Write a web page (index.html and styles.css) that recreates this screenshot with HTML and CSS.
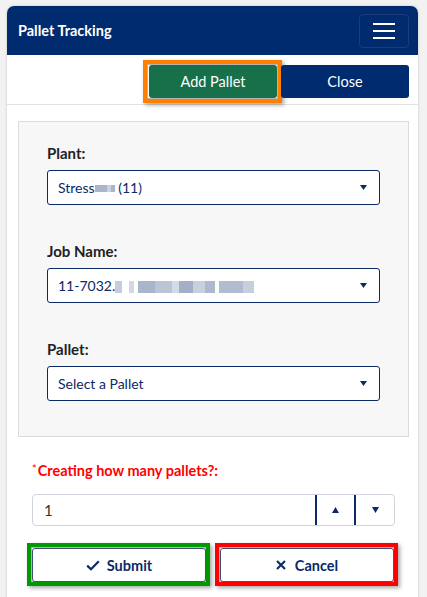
FILE: index.html
```html
<!DOCTYPE html>
<html lang="en">
<head>
<meta charset="utf-8">
<title>Pallet Tracking</title>
<link rel="stylesheet" href="styles.css">
</head>
<body>
<div class="card">
  <header class="header">
    <h1 class="title">Pallet Tracking</h1>
    <button class="menu-btn" aria-label="Menu"><span></span><span></span><span></span></button>
  </header>
  <div class="toolbar">
    <button class="btn btn-add ring ring-orange">Add Pallet</button>
    <button class="btn btn-close">Close</button>
  </div>
  <div class="content">
    <div class="panel">
      <div class="field">
        <label class="field-label">Plant:</label>
        <div class="select">
          <span class="select-text">Stress<span class="blur blur-plant"></span> (11)</span>
          <svg class="caret" width="7" height="5" viewBox="0 0 7 5"><path d="M0 0H7L3.5 5Z" fill="#0b2a66"/></svg>
        </div>
      </div>
      <div class="field">
        <label class="field-label">Job Name:</label>
        <div class="select">
          <span class="select-text">11-7032.<span class="blur blur-job"></span></span>
          <svg class="caret" width="7" height="5" viewBox="0 0 7 5"><path d="M0 0H7L3.5 5Z" fill="#0b2a66"/></svg>
        </div>
      </div>
      <div class="field">
        <label class="field-label">Pallet:</label>
        <div class="select">
          <span class="select-text">Select a Pallet</span>
          <svg class="caret" width="7" height="5" viewBox="0 0 7 5"><path d="M0 0H7L3.5 5Z" fill="#0b2a66"/></svg>
        </div>
      </div>
    </div>
    <div class="qty">
      <div class="qty-label"><span class="req">*</span>Creating how many pallets?:</div>
      <div class="number">
        <span class="number-value">1</span>
        <span class="spin"><svg width="7" height="6" viewBox="0 0 7 6"><path d="M0 6H7L3.5 0Z" fill="#0b2a66"/></svg></span>
        <span class="spin spin-last"><svg width="7" height="6" viewBox="0 0 7 6"><path d="M0 0H7L3.5 6Z" fill="#0b2a66"/></svg></span>
      </div>
      <div class="actions">
        <button class="action ring ring-green">
          <svg width="14" height="11" viewBox="0 0 14 11"><polyline points="1.2,5.6 5,9.2 12.8,1.3" fill="none" stroke="#0b2a66" stroke-width="2.2"/></svg>
          Submit
        </button>
        <button class="action action-cancel ring ring-red">
          <svg width="10" height="10" viewBox="0 0 10 10"><path d="M1 1L9 9M9 1L1 9" stroke="#0b2a66" stroke-width="2.1"/></svg>
          Cancel
        </button>
      </div>
    </div>
  </div>
</div>
</body>
</html>
```
FILE: styles.css
```css
html, body {
  margin: 0;
  padding: 0;
}
body {
  background: #f2f2f2;
  height: 597px;
  overflow: hidden;
  font-family: Lato, "Open Sans", sans-serif;
  font-size: 14px;
  line-height: 20px;
}
.card {
  margin: 6px 0 0 7px;
  width: 411px;
  height: 640px;
  background: #fff;
  border-radius: 7px 7px 0 0;
  box-shadow: 0 0 3px rgba(0, 0, 0, 0.18);
}
.header {
  height: 49px;
  background: #002b6e;
  border-radius: 7px 7px 0 0;
  display: flex;
  align-items: center;
  justify-content: space-between;
  padding: 0 9px 0 11px;
}
.title {
  margin: 0;
  color: #fff;
  font-size: 14.5px;
  font-weight: 700;
  line-height: 20px;
}
.menu-btn {
  width: 50px;
  height: 34px;
  background: transparent;
  border: 1px solid #1b3d7c;
  border-radius: 4px;
  display: flex;
  flex-direction: column;
  align-items: center;
  justify-content: center;
  gap: 5px;
  padding: 0;
}
.menu-btn span {
  display: block;
  width: 22px;
  height: 2px;
  background: #fff;
}
.toolbar {
  height: 50px;
  border-bottom: 1px solid #e2e2e2;
  display: flex;
  justify-content: flex-end;
  align-items: flex-start;
  gap: 4px;
  padding: 10px 9px 0 0;
  box-sizing: border-box;
}
.btn {
  width: 128px;
  height: 33px;
  border: 0;
  border-radius: 3px;
  color: #fff;
  font-family: Lato, sans-serif;
  font-size: 14.5px;
  padding: 0;
}
.btn-add {
  background: #17704a;
}
.btn-close {
  background: #002b6e;
  position: relative;
  z-index: 1;
}
.ring {
  position: relative;
}
.ring::before {
  content: "";
  position: absolute;
  top: -6px;
  left: -6px;
  right: -5px;
  bottom: -5px;
  border: 4px solid;
  box-shadow: inset 0 0 0 1px rgba(90, 90, 90, 0.45), 2px 2px 4px rgba(0, 0, 0, 0.35);
  pointer-events: none;
}
.ring-orange::before {
  border-color: #ff8000;
  top: -5px;
  left: -6px;
}
.ring-green::before {
  border-color: #009a00;
}
.ring-red::before {
  border-color: #ff0000;
}
.content {
  padding: 16px 9px 0 11px;
}
.panel {
  background: #f7f7f7;
  border: 1px solid #dcdcdc;
  padding: 21px 28px 35px;
}
.field + .field {
  margin-top: 36px;
}
.field-label {
  display: block;
  font-size: 15px;
  font-weight: 700;
  color: #222;
  margin-bottom: 7px;
}
.select {
  height: 35px;
  box-sizing: border-box;
  border: 1px solid #0b2a66;
  border-radius: 3px;
  background: #fff;
  display: flex;
  align-items: center;
  justify-content: space-between;
  padding: 0 12px 0 10px;
  color: #0b2a66;
}
.blur {
  display: inline-block;
  vertical-align: 1px;
}
.blur-plant {
  width: 20px;
  height: 7px;
  background: linear-gradient(90deg, #aab5cc 0 12px, #cbd2df 12px 16px, #aab5cc 16px 20px);
}
.blur-job {
  width: 139px;
  height: 12px;
  vertical-align: -2px;
  background: linear-gradient(90deg, #c5cddc 0 7px, transparent 7px 14px, #d3d9e4 14px 19px, transparent 19px 23px, #a9b5cc 23px 40px, #bcc5d6 40px 57px, #d5dbe5 57px 64px, #a3afc8 64px 78px, #c9d0dd 78px 90px, #aeb9cf 90px 100px, transparent 100px 104px, #b2bccf 104px 128px, #c8cfdc 128px 139px);
}
.qty {
  padding: 0 14px;
}
.qty-label {
  margin-top: 22px;
  color: #ff0000;
  font-size: 14.5px;
  font-weight: 700;
}
.req {
  font-weight: 400;
  font-size: 11px;
  vertical-align: 3px;
  margin-right: 1px;
}
.number {
  margin-top: 13px;
  height: 32px;
  box-sizing: border-box;
  border: 1px solid #cfd4dc;
  border-radius: 4px;
  display: flex;
  align-items: stretch;
}
.number-value {
  flex: 1;
  display: flex;
  align-items: center;
  padding-left: 11px;
  color: #333;
  font-size: 15px;
}
.spin {
  width: 37px;
  border-left: 2px solid #0b2a66;
  display: flex;
  align-items: center;
  justify-content: center;
}
.spin-last {
  width: 38px;
}
.actions {
  margin-top: 22px;
  margin-right: 1px;
  display: grid;
  grid-template-columns: 1fr 1fr;
  gap: 14px;
}
.action {
  height: 34px;
  border: 1px solid #3d4b7a;
  border-radius: 3px;
  background: #fff;
  color: #0b2a66;
  font-family: Lato, sans-serif;
  font-size: 14.5px;
  font-weight: 700;
  display: flex;
  align-items: center;
  justify-content: center;
  gap: 7px;
  padding: 0;
}
.action-cancel {
  gap: 9px;
}
```
